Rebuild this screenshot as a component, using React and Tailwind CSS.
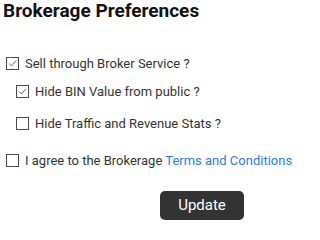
import React, { useState } from "react";

function Box({ checked, onChange }) {
  return (
    <button
      type="button"
      onClick={onChange}
      className="w-[13px] h-[13px] shrink-0 border border-[#4a4a4a] bg-white flex items-center justify-center"
    >
      {checked && (
        <svg width="9" height="9" viewBox="0 0 9 9" fill="none">
          <path d="M1 4.5 L3.5 7 L8 1.5" stroke="#6b6b6b" strokeWidth="1" />
        </svg>
      )}
    </button>
  );
}

function Row({ checked, onChange, indent, children }) {
  return (
    <label className={`flex items-center gap-[6px] ${indent ? "pl-[16px]" : "pl-[6px]"}`}>
      <Box checked={checked} onChange={onChange} />
      <span className="text-[13px] text-[#333]">{children}</span>
    </label>
  );
}

export default function App() {
  const [sell, setSell] = useState(true);
  const [hideBin, setHideBin] = useState(true);
  const [hideStats, setHideStats] = useState(false);
  const [agree, setAgree] = useState(false);

  return (
    <div className="w-[295px] h-[225px] bg-white font-['Roboto',sans-serif] overflow-hidden">
      <h2 className="pl-[3px] pt-0 text-[19px] leading-[22px] font-bold text-[#111]">
        Brokerage Preferences
      </h2>
      <div className="mt-[32px] flex flex-col">
        <Row checked={sell} onChange={() => setSell(!sell)}>
          Sell through Broker Service ?
        </Row>
        <div className="mt-[8px]">
          <Row indent checked={hideBin} onChange={() => setHideBin(!hideBin)}>
            Hide BIN Value from public ?
          </Row>
        </div>
        <div className="mt-[13px]">
          <Row indent checked={hideStats} onChange={() => setHideStats(!hideStats)}>
            Hide Traffic and Revenue Stats ?
          </Row>
        </div>
        <div className="mt-[17px]">
          <Row checked={agree} onChange={() => setAgree(!agree)}>
            I agree to the Brokerage{" "}
            <a href="#" className="text-[#2a7ae2]">Terms and Conditions</a>
          </Row>
        </div>
      </div>
      <div className="mt-[21px] pl-[160px]">
        <button className="w-[84px] h-[29px] rounded-[5px] bg-[#333] text-white text-[15px]">
          Update
        </button>
      </div>
    </div>
  );
}
